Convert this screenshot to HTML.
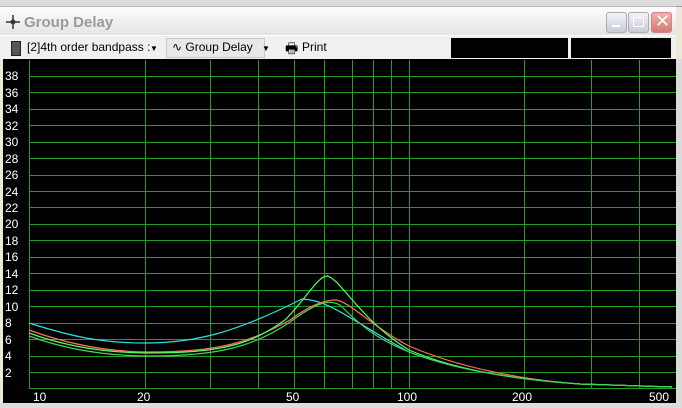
<!DOCTYPE html>
<html><head><style>
body{margin:0;width:682px;height:408px;overflow:hidden;background:#ece9d8;font-family:"Liberation Sans",sans-serif;position:relative}
.title{position:absolute;left:0;top:6px;width:676px;height:28px;background:linear-gradient(#fdfdfd,#e4e4e4);border-top:1px solid #bbb}
.title span{position:absolute;left:24px;top:7px;font-weight:bold;font-size:15px;color:#9a9a9a}
.btn{position:absolute;top:12px;width:19px;height:19px;border-radius:3px;border:1px solid #aab;background:linear-gradient(#f4f4f8,#c8cbd6)}
.tb{position:absolute;left:0;top:35px;width:676px;height:24px;background:#f0f0f0;border-top:1px solid #fff}
.tb div{position:absolute;top:4px;font-size:12px;color:#000}
</style></head><body>
<div style="position:absolute;left:0;top:0;width:682px;height:6px;background:#dcdcdc;border-bottom:1px solid #999"></div>
<div class="title"><span>Group Delay</span>
<svg style="position:absolute;left:6px;top:8px" width="14" height="14"><path d="M7 0V14M0 7H14" stroke="#333" stroke-width="1.5"/><circle cx="7" cy="7" r="2.5" fill="#333"/></svg>
</div>
<div class="btn" style="left:606px"><div style="position:absolute;left:5px;top:12px;width:8px;height:2px;background:#fff"></div></div>
<div class="btn" style="left:628px"><div style="position:absolute;left:4px;top:4px;width:9px;height:8px;border:1px solid #fff"></div></div>
<div class="btn" style="left:651px;background:linear-gradient(#f0b0a8,#d77a70);border-color:#c88"><span style="position:absolute;left:3px;top:-2px;color:#fff;font-size:18px">✕</span></div>
<div class="tb">
<div style="left:11px;top:5px;width:8px;height:13px;background:#555;border:1px solid #222"></div>
<div style="left:27px">[2]4th order bandpass :</div>
<div style="left:150px;font-size:8px;top:8px">▼</div>
<div style="left:166px;top:2px;width:97px;height:18px;border:1px solid #c8c8c8;background:#e8e8e8"></div>
<div style="left:172px">∿ Group Delay</div>
<div style="left:262px;font-size:8px;top:8px">▼</div>
<div style="left:285px;font-size:14px;top:2px">🖶</div><div style="left:302px">Print</div>
<div style="left:451px;top:2px;width:117px;height:20px;background:#000"></div>
<div style="left:571px;top:2px;width:100px;height:20px;background:#000"></div>
</div>
<svg style="position:absolute;left:0;top:59px" width="682" height="349" viewBox="0 59 682 349">
<rect x="3" y="59" width="673" height="345" fill="#000"/>
<rect x="676" y="59" width="6" height="349" fill="#dcdcdc"/>
<rect x="0" y="403" width="682" height="5" fill="#dcdcdc"/>
<g fill="#1fa01f" shape-rendering="crispEdges">
<rect x="29" y="60" width="1" height="328"/><rect x="145" y="60" width="1" height="328"/><rect x="210" y="60" width="1" height="328"/><rect x="258" y="60" width="1" height="328"/><rect x="294" y="60" width="1" height="328"/><rect x="324" y="60" width="1" height="328"/><rect x="352" y="60" width="1" height="328"/><rect x="373" y="60" width="1" height="328"/><rect x="391" y="60" width="1" height="328"/><rect x="409" y="60" width="1" height="328"/><rect x="524" y="60" width="1" height="328"/><rect x="591" y="60" width="1" height="328"/><rect x="639" y="60" width="1" height="328"/>
</g>
<g stroke="#1fa01f" stroke-width="1" shape-rendering="crispEdges">
<path d="M29 76.5H676M29 92.5H676M29 109.5H676M29 125.5H676M29 142.5H676M29 158.5H676M29 175.5H676M29 191.5H676M29 207.5H676M29 224.5H676M29 240.5H676M29 257.5H676M29 273.5H676M29 290.5H676M29 306.5H676M29 323.5H676M29 339.5H676M29 356.5H676M29 372.5H676M29 388.5H676"/>
</g>
<g fill="none" stroke-width="1.2">
<path d="M29 323C70 336 100 343 145 343C200 343 240 330 302 299C330 300 350 320 409 352C460 372 524 380 580 384L672 387" stroke="#30e0e0"/>
<path d="M29 330C70 345 110 352 150 352C220 352 250 342 290 320C310 305 325 300 336 300C350 302 370 325 409 346C460 368 524 380 580 384L672 387" stroke="#ff7050"/>
<path d="M29 333C70 348 110 353 150 353C220 353 250 345 285 320C305 300 318 276 327 276C340 278 360 320 409 350C460 372 524 380 580 384L672 387" stroke="#50ff60"/>
<path d="M29 336C70 351 110 356 150 356C220 356 255 346 290 322C320 300 330 300 340 305C365 330 380 340 409 352C460 372 524 380 580 384L672 387" stroke="#40d060"/>
</g>
<g fill="#fff" font-size="12" font-family="Liberation Sans,sans-serif">
<text x="5" y="80">38</text><text x="5" y="97">36</text><text x="5" y="113">34</text><text x="5" y="130">32</text><text x="5" y="146">30</text><text x="5" y="163">28</text><text x="5" y="179">26</text><text x="5" y="196">24</text><text x="5" y="212">22</text><text x="5" y="228">20</text><text x="5" y="245">18</text><text x="5" y="261">16</text><text x="5" y="278">14</text><text x="5" y="294">12</text><text x="5" y="311">10</text><text x="5" y="327">8</text><text x="5" y="344">6</text><text x="5" y="360">4</text><text x="5" y="377">2</text>
<text x="33" y="401">10</text><text x="137" y="401">20</text><text x="286" y="401">50</text><text x="397" y="401">100</text><text x="512" y="401">200</text><text x="649" y="401">500</text>
</g>
</svg>
</body></html>
